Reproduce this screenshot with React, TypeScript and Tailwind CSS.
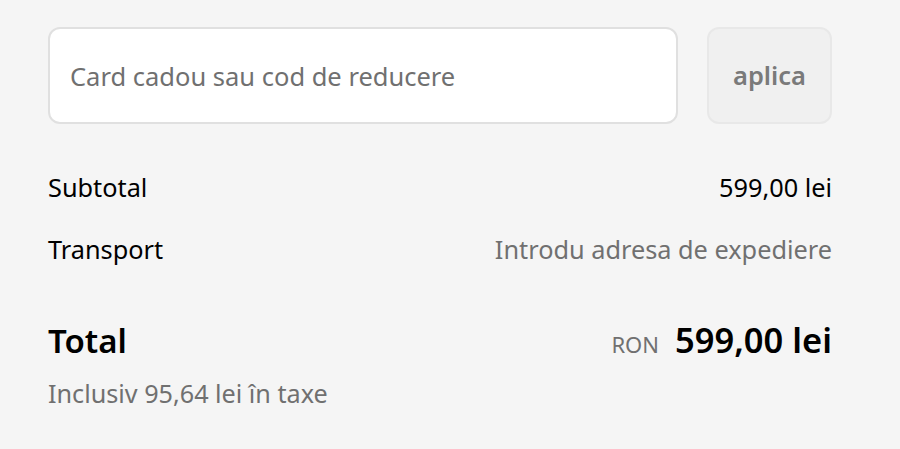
export default function App() {
  return (
    <div className="min-h-screen w-full bg-[#f5f5f5] font-['Noto_Sans',sans-serif] text-[#000000]">
      <div className="px-12 pt-[27px]">
        <div className="w-[784px]">
          <div className="flex gap-[29px]">
            <input
              className="h-[97px] flex-1 rounded-[12px] border-2 border-[#e0e0e0] bg-white px-5 text-[25.5px] text-[#707070] placeholder:text-[#707070] outline-none"
              placeholder="Card cadou sau cod de reducere"
            />
            <button className="h-[97px] w-[125px] rounded-[12px] border-2 border-[#e8e8e8] bg-[#f0f0f0] text-[25.5px] font-semibold text-[#7a7a7a]">
              aplica
            </button>
          </div>

          <div className="mt-[47px] flex items-center justify-between text-[25.3px] leading-[32px]">
            <span>Subtotal</span>
            <span>599,00 lei</span>
          </div>
          <div className="mt-[30px] flex items-center justify-between text-[25.3px] leading-[32px]">
            <span>Transport</span>
            <span className="text-[#707070]">Introdu adresa de expediere</span>
          </div>

          <div className="mt-[55px] flex items-baseline justify-between leading-[40px]">
            <span className="text-[33px] font-semibold">Total</span>
            <span className="flex items-baseline gap-4">
              <span className="text-[22px] text-[#707070]">RON</span>
              <span className="text-[34.5px] font-semibold">599,00 lei</span>
            </span>
          </div>
          <div className="mt-[13px] text-[25.2px] leading-[32px] text-[#707070]">Inclusiv 95,64 lei în taxe</div>
        </div>
      </div>
    </div>
  );
}
